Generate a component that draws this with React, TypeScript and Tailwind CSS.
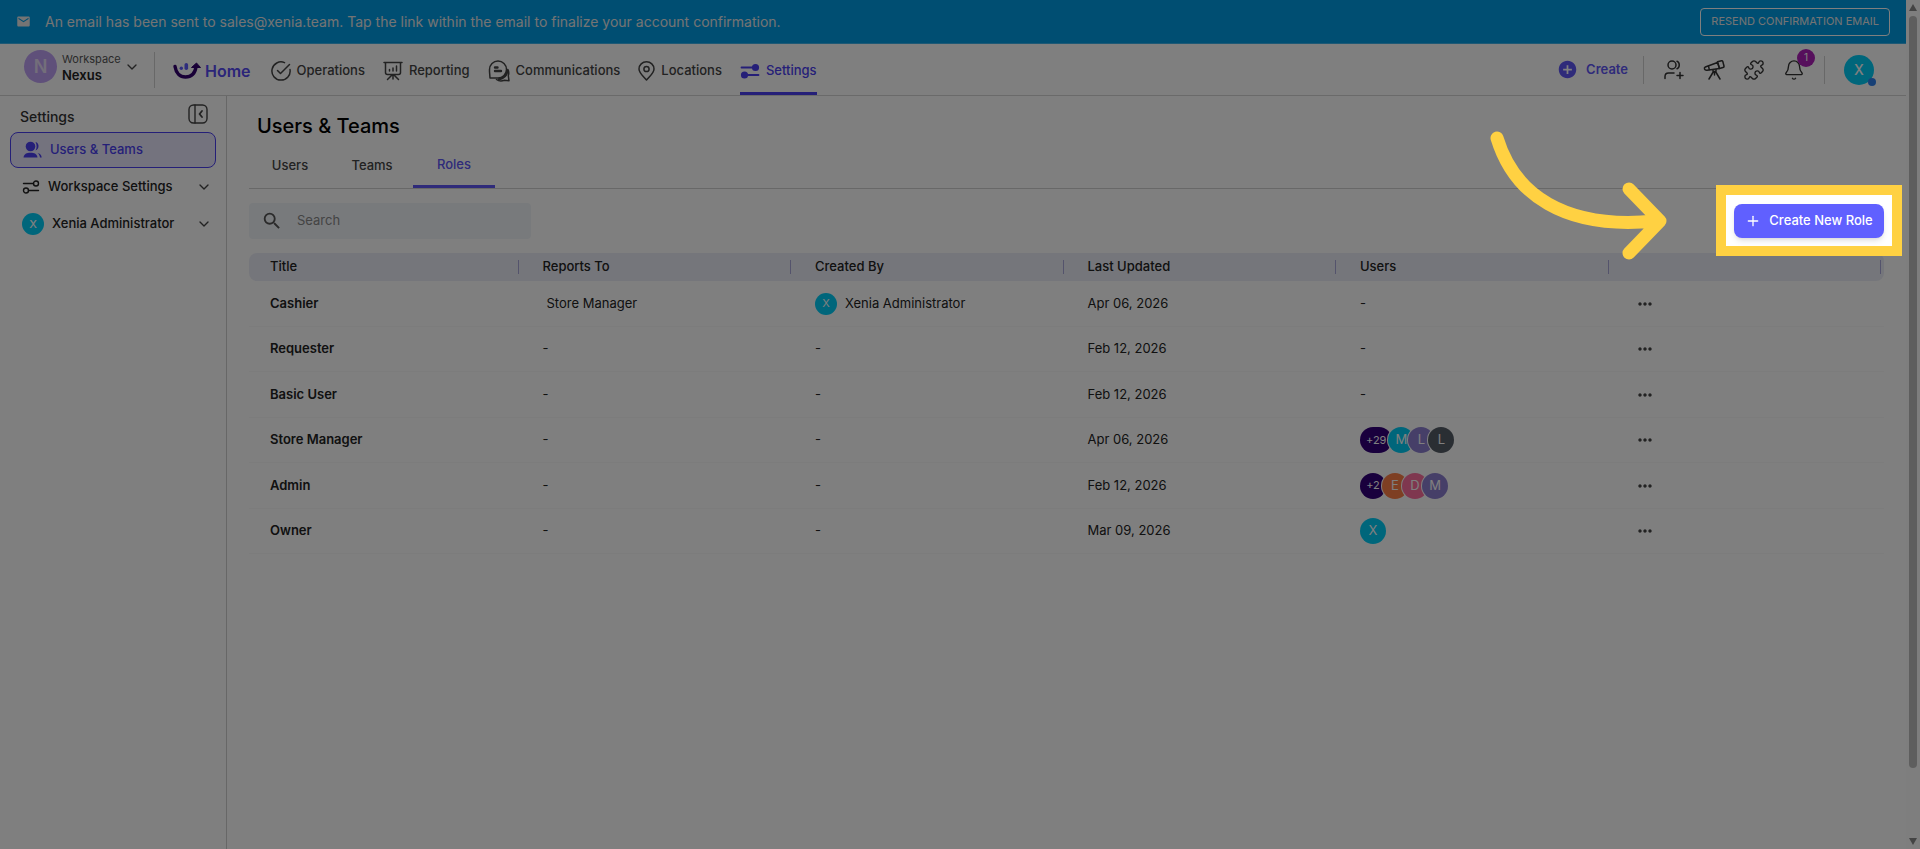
import { ChevronDown, Puzzle, Bell, Plus } from "lucide-react";
import { MdEmail, MdSearch, MdMoreHoriz, MdAddCircle } from "react-icons/md";

type Badge = { label: string; color: string };

type Role = {
    title: string;
    reportsTo?: string;
    createdBy?: string;
    updated: string;
    users: Badge[];
};

const roles: Role[] = [
    { title: "Cashier", reportsTo: "Store Manager", createdBy: "Xenia Administrator", updated: "Apr 06, 2026", users: [] },
    { title: "Requester", updated: "Feb 12, 2026", users: [] },
    { title: "Basic User", updated: "Feb 12, 2026", users: [] },
    {
        title: "Store Manager",
        updated: "Apr 06, 2026",
        users: [
            { label: "+29", color: "bg-[#32007a]" },
            { label: "M", color: "bg-[#00cdf7]" },
            { label: "L", color: "bg-[#8c7fd0]" },
            { label: "L", color: "bg-[#555c66]" },
        ],
    },
    {
        title: "Admin",
        updated: "Feb 12, 2026",
        users: [
            { label: "+2", color: "bg-[#32007a]" },
            { label: "E", color: "bg-[#fd7e46]" },
            { label: "D", color: "bg-[#ff6f9f]" },
            { label: "M", color: "bg-[#8c7fd0]" },
        ],
    },
    { title: "Owner", updated: "Mar 09, 2026", users: [{ label: "X", color: "bg-[#00cdf7]" }] },
];

const columns = ["Title", "Reports To", "Created By", "Last Updated", "Users", ""];

function Logo() {
    return (
        <svg width="28" height="18" viewBox="0 0 28 18" fill="none">
            <path d="M2 4.500C3 11 7 15 12.500 15C18 15 22 11.500 23 5" stroke="#32006e" strokeWidth="3.400" strokeLinecap="round" />
            <path d="M18.500 5.500L23.500 1L27.500 5.500Z" fill="#32006e" stroke="#32006e" strokeLinejoin="round" />
            <circle cx="8.300" cy="6.300" r="1.700" fill="#5e5afb" />
            <rect x="11.500" y="1" width="3.600" height="7" rx="1.800" fill="#5e5afb" />
        </svg>
    );
}

function OperationsIcon() {
    return (
        <svg width="20" height="20" viewBox="0 0 20 20" fill="none" stroke="currentColor" strokeWidth="1.500" strokeLinecap="round" strokeLinejoin="round">
            <path d="M13.500 1.600A9.100 9.100 0 1 0 19 8.500" />
            <path d="M6.500 9.500L9.500 12.500L18.500 3.500" />
        </svg>
    );
}

function ReportingIcon() {
    return (
        <svg width="20" height="20" viewBox="0 0 20 20" fill="none" stroke="currentColor" strokeWidth="1.500" strokeLinecap="round" strokeLinejoin="round">
            <path d="M1 1.500H19M2.500 1.500V11.500Q2.500 13.500 4.500 13.500H15.500Q17.500 13.500 17.500 11.500V1.500M10 13.500V18M9 14L4.500 18.500M11 14L15.500 18.500M6.500 10V8.500M10 10V7M13.500 10V5" />
        </svg>
    );
}

function ChatIcon() {
    return (
        <svg width="22" height="22" viewBox="0 0 22 22" fill="none" stroke="currentColor" strokeWidth="1.500" strokeLinecap="round" strokeLinejoin="round">
            <path d="M2 18L1.500 11.500V9.500A8.500 8.500 0 1 1 10 18Z" />
            <path d="M7 7.500H9.500M7 11H13" strokeWidth="2.400" />
            <path d="M19.800 9.500C21 11.500 21 13.500 20.300 15.500L21 20.800L16.500 20.300C13.500 21.300 10.500 21 8.500 19.500" />
            <path d="M19.500 11C18.500 15.500 15 18.500 11 19.300" strokeWidth="2.400" />
        </svg>
    );
}

function PinIcon() {
    return (
        <svg width="17" height="20" viewBox="0 0 17 20" fill="none" stroke="currentColor" strokeWidth="1.500" strokeLinejoin="round">
            <path d="M8.500 19C5 14.800 1 12 1 8A7.500 7.200 0 0 1 16 8C16 12 12 14.800 8.500 19Z" />
            <circle cx="8.500" cy="8" r="2.600" />
        </svg>
    );
}

function InviteIcon() {
    return (
        <svg width="22" height="22" viewBox="0 0 22 22" fill="none" stroke="currentColor" strokeWidth="1.500" strokeLinecap="round" strokeLinejoin="round">
            <circle cx="9" cy="6" r="4" />
            <path d="M14 2.300C17 3.500 17 8.500 14 9.700M2 19.500V17.500C2 15.500 3.500 14 5.500 14H11M17 13.500V19.500M14 16.500H20" />
        </svg>
    );
}

function TelescopeIcon() {
    return (
        <svg width="22" height="22" viewBox="0 0 22 22" fill="none" stroke="currentColor" strokeWidth="1.500" strokeLinecap="round" strokeLinejoin="round">
            <path d="M2.300 8L14.500 3.500L16.500 9.500L4 11.200Q2 11.400 1.500 10T2.300 8Z" />
            <path d="M14.500 2.800L18.500 1.700Q19.500 1.500 19.800 2.500L21 7Q21.200 8.200 20 8.500L16.500 9.500ZM5.500 7.200L6.300 10.600M10 11V12.500H13V10.500M10.500 12.500L6 20M12.500 12.500L17 20M11.500 12.500V16" />
        </svg>
    );
}

function SlidersIcon({ filled }: { filled?: boolean }) {
    return filled ? (
        <svg width="20" height="16" viewBox="0 0 20 16" fill="none" stroke="currentColor" strokeWidth="1.800" strokeLinecap="round">
            <path d="M1.500 4.500H12M8 12H18.500" />
            <circle cx="15.500" cy="4.500" r="2.700" fill="currentColor" />
            <circle cx="4.500" cy="12" r="2.700" fill="currentColor" />
        </svg>
    ) : (
        <svg width="18" height="14" viewBox="0 0 18 14" fill="none" stroke="currentColor" strokeWidth="1.400" strokeLinecap="round">
            <path d="M1.500 3.500H11.500M6.500 10.500H16.500" />
            <circle cx="14" cy="3.500" r="2.500" />
            <circle cx="4" cy="10.500" r="2.500" />
        </svg>
    );
}

function UsersIcon() {
    return (
        <svg width="19" height="18" viewBox="0 0 19 18" fill="currentColor">
            <circle cx="7.500" cy="5.500" r="4.800" />
            <path d="M0.500 16.500C1 13 3.500 11.800 7.500 11.800S14 13 14.500 16.500Z" />
            <path d="M12.500 1C16.500 2 16.500 8 12.500 9.500C14 7 14 4 12.500 1ZM14.500 12C17 12.500 18.500 14 18.700 16.500H17C16.700 14.500 16 13 14.500 12Z" />
        </svg>
    );
}

function CollapseIcon() {
    return (
        <svg width="20" height="20" viewBox="0 0 20 20" fill="none" stroke="currentColor" strokeWidth="1.400" strokeLinecap="round" strokeLinejoin="round">
            <rect x="1" y="1" width="18" height="18" rx="4.500" />
            <path d="M7 1V19" />
            <path d="M14 7L11.500 10L14 13" strokeWidth="1.800" />
        </svg>
    );
}

function NavLink({ icon, label, active }: { icon: React.ReactNode; label: string; active?: boolean }) {
    return (
        <a
            href="#"
            className={
                active
                    ? "flex h-full items-center gap-1.5 border-b-3 border-[#4b3ff0] pt-1.5 text-[13px] font-medium text-[#4b3ff0]"
                    : "flex h-full items-center gap-1.5 border-b-3 border-transparent pt-1.5 text-[13px] font-medium text-[#444]"
            }
        >
            {icon}
            {label}
        </a>
    );
}

function Banner() {
    return (
        <div className="flex h-11 items-center border-b border-[#3db3ea] bg-[#009ce4] pl-4 pr-4 text-white">
            <MdEmail size={15} className="text-[#e8e8e8]" />
            <p className="ml-3.5 grow text-sm text-[#e8e8e8]">
                An email has been sent to sales@xenia.team. Tap the link within the email to finalize your account confirmation.
            </p>
            <button className="h-7 rounded border border-white px-2.5 text-[11px] text-[#e8e8e8]">RESEND CONFIRMATION EMAIL</button>
        </div>
    );
}

function Header() {
    return (
        <header className="flex h-13 items-center border-b border-[#d5d5d5] pl-6 pr-8">
            <button className="mb-1.5 flex items-center gap-1 text-left">
                <span className="flex size-[33px] items-center justify-center rounded-full bg-[#bfa0f5] text-lg font-semibold text-[#e6ddf5]">N</span>
                <span className="ml-px w-15 leading-4">
                    <span className="block text-[11px] text-[#555]">Workspace</span>
                    <span className="block text-[13px] font-semibold text-[#222]">Nexus</span>
                </span>
                <ChevronDown size={16} className="-ml-0.5 text-[#444]" />
            </button>
            <div className="ml-3.5 h-9 w-px bg-[#d0d0d0]" />
            <nav className="ml-[18px] flex h-full items-center gap-[18px]">
                <a href="#" className="mr-0.5 flex items-center gap-1 pt-0.5 text-base font-semibold text-[#564af2]">
                    <Logo />
                    Home
                </a>
                <NavLink icon={<OperationsIcon />} label="Operations" />
                <NavLink icon={<ReportingIcon />} label="Reporting" />
                <NavLink icon={<ChatIcon />} label="Communications" />
                <NavLink icon={<PinIcon />} label="Locations" />
                <NavLink icon={<SlidersIcon filled />} label="Settings" active />
            </nav>
            <div className="ml-auto flex items-center gap-[19px] text-[#333]">
                <button className="-mr-1 flex items-center gap-2 text-[13px] font-semibold text-[#5e56f5]">
                    <MdAddCircle size={21} />
                    Create
                </button>
                <div className="h-7 w-px bg-[#d0d0d0]" />
                <div className="flex items-center gap-[18px]">
                    <button aria-label="Invite user">
                        <InviteIcon />
                    </button>
                    <button aria-label="Explore">
                        <TelescopeIcon />
                    </button>
                    <button aria-label="Integrations">
                        <Puzzle size={22} strokeWidth={1.5} />
                    </button>
                    <button aria-label="Notifications" className="relative">
                        <Bell size={22} strokeWidth={1.5} />
                        <span className="absolute -right-2.5 -top-2.5 flex size-[18px] items-center justify-center rounded-full bg-[#ad1fb8] text-[10px] text-white">1</span>
                    </button>
                </div>
                <div className="h-7 w-px bg-[#d0d0d0]" />
                <button aria-label="Account" className="relative flex size-[30px] items-center justify-center rounded-full bg-[#00cdf7] text-sm font-medium text-white">
                    X
                    <span className="absolute -bottom-px -right-0.5 size-2 rounded-full bg-[#2f80ed]" />
                </button>
            </div>
        </header>
    );
}

function Sidebar() {
    return (
        <aside className="w-[227px] shrink-0 border-r border-[#cfcfcf] px-2.5 pt-1 text-[13px] font-medium text-[#222]">
            <div className="mb-1 flex h-7 items-center justify-between pl-2.5 pr-2">
                <h2 className="pt-1.5 text-sm text-[#333]">Settings</h2>
                <button aria-label="Collapse sidebar" className="text-[#444]">
                    <CollapseIcon />
                </button>
            </div>
            <a href="#" className="flex h-9 items-center gap-2 rounded-lg border border-[#4b3ff0] bg-[#e8e6fd] pl-3 text-[#4b3ff0]">
                <UsersIcon />
                Users &amp; Teams
            </a>
            <button className="flex h-[38px] w-full items-center pl-3 pr-1">
                <SlidersIcon />
                <span className="ml-2 grow text-left">Workspace Settings</span>
                <ChevronDown size={16} className="text-[#444]" />
            </button>
            <button className="flex h-9 w-full items-center pl-3 pr-1">
                <span className="flex size-[22px] items-center justify-center rounded-full bg-[#00cdf7] text-[11px] text-white">X</span>
                <span className="ml-2 grow text-left">Xenia Administrator</span>
                <ChevronDown size={16} className="text-[#444]" />
            </button>
        </aside>
    );
}

// Everything outside this frame is dimmed by its oversized shadow.
function Spotlight() {
    return (
        <>
            <div className="pointer-events-none absolute -inset-x-2 -top-[9px] -bottom-2 z-10 shadow-[0_0_0_3000px_rgba(0,0,0,0.5)]" />
            <div className="pointer-events-none absolute -inset-x-[18px] -top-[19px] -bottom-[18px] z-20 border-10 border-[#ffd142]" />
            <svg className="pointer-events-none absolute right-[216px] -top-[76px] z-20" width="180" height="136" viewBox="0 0 180 136" fill="none" stroke="#ffd142" strokeWidth="13" strokeLinecap="round" strokeLinejoin="round">
                <path d="M9 10C26 66 76 102 167 93M141 61L172 93L141 125" />
            </svg>
        </>
    );
}

function RolesTable() {
    return (
        <table className="mt-3.5 w-full table-fixed border-separate border-spacing-0 text-left text-[13px] text-[#222]">
            <thead>
                <tr className="h-7">
                    {columns.map((name, index) => (
                        <th key={index} className="bg-[#ebedf6] p-0 font-medium first:rounded-l-lg last:rounded-r-lg">
                            <div className="mr-[3px] flex h-3.5 items-center border-r border-[#a9a6d8] pl-[21px]">{name}</div>
                        </th>
                    ))}
                </tr>
            </thead>
            <tbody className="[&_td]:border-b [&_td]:border-[#f8f8f8] [&_td]:py-0 [&_td]:pr-0 [&_td]:pl-[21px]">
                {roles.map((role) => (
                    <tr key={role.title} className="h-[46px] even:h-[45px]">
                        <td className="font-semibold">{role.title}</td>
                        <td>{role.reportsTo ? <span className="pl-1">{role.reportsTo}</span> : "-"}</td>
                        <td>
                            {role.createdBy ? (
                                <div className="flex items-center gap-2">
                                    <span className="flex size-[22px] items-center justify-center rounded-full bg-[#00cdf7] text-[11px] text-white">X</span>
                                    {role.createdBy}
                                </div>
                            ) : (
                                "-"
                            )}
                        </td>
                        <td>{role.updated}</td>
                        <td>
                            {role.users.length === 0 && "-"}
                            <div className="flex">
                                {role.users.map((user, index) => (
                                    <span
                                        key={index}
                                        className={`flex h-[26px] min-w-[26px] items-center justify-center rounded-full px-1.5 text-white ring-1 ring-white ${user.color} ${user.label.startsWith("+") ? "-mr-1 text-[11px]" : "-mr-1.5 text-[13px]"}`}
                                    >
                                        {user.label}
                                    </span>
                                ))}
                            </div>
                        </td>
                        <td>
                            <button aria-label="More actions" className="ml-0.5 block text-[#444]">
                                <MdMoreHoriz size={20} />
                            </button>
                        </td>
                    </tr>
                ))}
            </tbody>
        </table>
    );
}

function Scrollbar() {
    return (
        <div className="flex w-3.5 shrink-0 flex-col items-center bg-[#fcfcfc] py-1">
            <div className="border-x-4 border-b-7 border-x-transparent border-b-[#888]" />
            <div className="mt-[5px] w-2 grow rounded-full bg-[#bdbdbd]" />
            <div className="mt-[70px] border-x-4 border-t-7 border-x-transparent border-t-[#888]" />
        </div>
    );
}

export default function App() {
    return (
        <div className="flex min-h-screen overflow-hidden bg-white font-['Inter',sans-serif]">
            <div className="flex grow flex-col">
                <Banner />
                <Header />
                <div className="flex grow">
                    <Sidebar />
                    <main className="grow pl-[22px] pr-[22px] pt-4">
                        <h1 className="pl-2 text-xl font-medium leading-7 text-black">Users &amp; Teams</h1>
                        <div role="tablist" className="mt-1 flex h-[45px] border-b border-[#d0d0d0] text-[13px] font-medium text-[#444]">
                            <button role="tab" className="w-[82px]">Users</button>
                            <button role="tab" className="w-[82px]">Teams</button>
                            <button role="tab" aria-selected="true" className="w-[82px] border-b-3 border-[#5e56f5] text-[#5e56f5]">Roles</button>
                        </div>
                        <div className="mt-3.5 flex items-center justify-between">
                            <label className="flex h-9 w-[282px] items-center gap-3.5 rounded bg-[#f1f4f9] pl-3">
                                <MdSearch size={22} className="shrink-0 text-[#555]" />
                                <input type="text" placeholder="Search" className="w-full bg-transparent text-[13px] outline-none placeholder:text-[#888]" />
                            </label>
                            <div className="relative">
                                <button className="flex h-[34px] w-[150px] items-center justify-center gap-2 rounded-lg bg-[#6060ff] text-[13px] font-medium text-white shadow-md">
                                    <Plus size={16} />
                                    Create New Role
                                </button>
                                <Spotlight />
                            </div>
                        </div>
                        <RolesTable />
                    </main>
                </div>
            </div>
            <Scrollbar />
        </div>
    );
}
